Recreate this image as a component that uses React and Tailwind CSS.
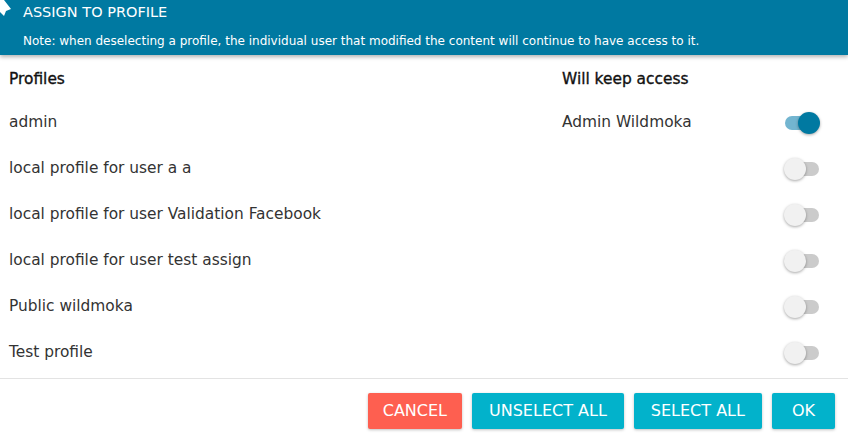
const profiles = [
  { name: "admin", keep: "Admin Wildmoka", on: true },
  { name: "local profile for user a a", keep: "", on: false },
  { name: "local profile for user Validation Facebook", keep: "", on: false },
  { name: "local profile for user test assign", keep: "", on: false },
  { name: "Public wildmoka", keep: "", on: false },
  { name: "Test profile", keep: "", on: false },
];

const Toggle = ({ on }) => (
  <div className="relative w-[36px] h-[22px] flex items-center">
    <div className={`w-[34px] h-[14px] rounded-full ml-[1px] ${on ? "bg-[#73b5d0]" : "bg-[#cbcbcb]"}`} />
    <div
      className={`absolute top-0 w-[22px] h-[22px] rounded-full shadow-[0_1px_3px_rgba(0,0,0,0.35)] ${
        on ? "right-0 bg-[#0079a1]" : "left-0 bg-[#f1f1f1]"
      }`}
    />
  </div>
);

const App = () => {
  return (
    <div className="w-[848px] h-[441px] bg-white overflow-hidden font-['DejaVu_Sans',sans-serif] text-[#222]">
      <div className="relative h-[55px] bg-[#0079a1] text-white shadow-[0_2px_4px_rgba(0,0,0,0.3)] pl-[23px] pt-[3px]">
        <svg className="absolute left-0 top-0" width="14" height="18" viewBox="0 0 14 18">
          <polygon points="0,0 4,0 11,9 6,11 4,16 0,12" fill="#fff" />
        </svg>
        <div className="text-[14.5px] leading-[18px]">ASSIGN TO PROFILE</div>
        <div className="text-[12px] leading-[16px] mt-[12px]">
          Note: when deselecting a profile, the individual user that modified the content will continue to have access to it.
        </div>
      </div>

      <div className="h-[324px] border-b border-[#e3e3e3] px-[9px]">
        <div className="flex h-[45px] items-center pt-[5px] text-[15.4px] text-[#111] [-webkit-text-stroke:0.35px_#111]">
          <div className="w-[553px]">Profiles</div>
          <div>Will keep access</div>
        </div>
        {profiles.map((p) => (
          <div key={p.name} className="flex h-[46px] items-center text-[15.4px] text-[#333]">
            <div className="w-[553px]">{p.name}</div>
            <div className="flex-1">{p.keep}</div>
            <div className="mr-[19px]">
              <Toggle on={p.on} />
            </div>
          </div>
        ))}
      </div>

      <div className="flex justify-end gap-[10px] pr-[13px] pt-[14px] text-[16px] text-white">
        <button className="h-[36px] px-[15px] rounded-[2px] bg-[#fe5f50] shadow-[0_1px_3px_rgba(0,0,0,0.25)]">CANCEL</button>
        <button className="h-[36px] px-[17px] rounded-[2px] bg-[#02b2cb] shadow-[0_1px_3px_rgba(0,0,0,0.25)]">UNSELECT ALL</button>
        <button className="h-[36px] px-[17px] rounded-[2px] bg-[#02b2cb] shadow-[0_1px_3px_rgba(0,0,0,0.25)]">SELECT ALL</button>
        <button className="h-[36px] px-[20px] rounded-[2px] bg-[#02b2cb] shadow-[0_1px_3px_rgba(0,0,0,0.25)]">OK</button>
      </div>
    </div>
  );
};

export default App;
